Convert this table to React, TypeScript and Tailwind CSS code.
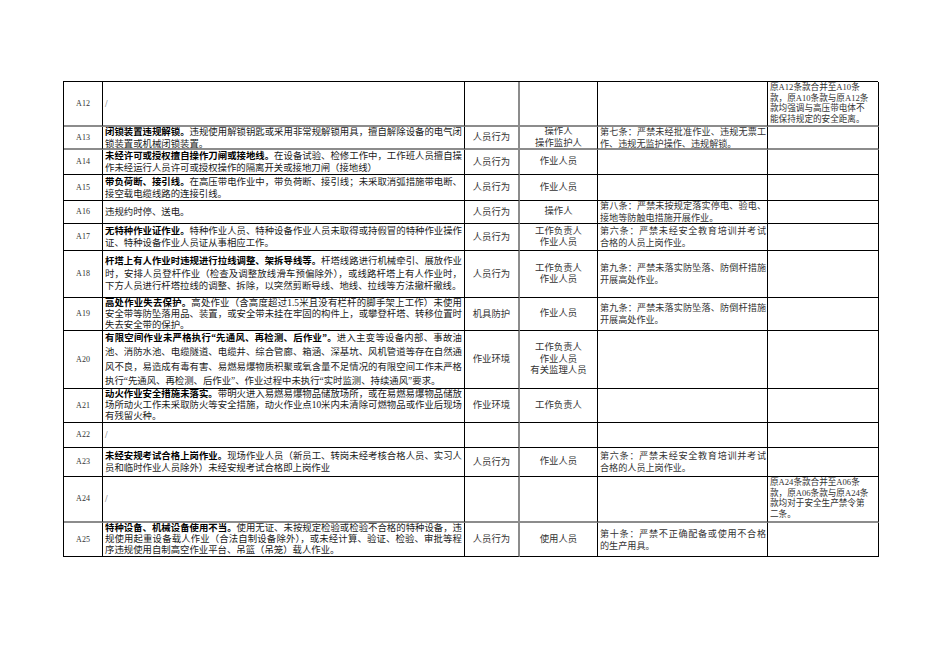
import React from "react";

type Row = {
  id: string;
  h: number;
  lead?: string;
  desc: { bold?: string; lines: string[] } | null;
  kind?: string;
  who?: string[];
  rule?: string[];
  note?: string[];
  grayBottom?: boolean;
};

const ROWS: Row[] = [
  {
    id: "A12",
    h: 45,
    desc: null,
    note: ["原A12条款合并至A10条", "款，原A10条款与原A12条", "款均强调与高压带电体不", "能保持规定的安全距离。"],
    grayBottom: true,
  },
  {
    id: "A13",
    h: 23,
    desc: {
      bold: "闭锁装置违规解锁。",
      lines: ["违规使用解锁钥匙或采用非常规解锁用具，擅自解除设备的电气闭", "锁装置或机械闭锁装置。"],
    },
    kind: "人员行为",
    who: ["操作人", "操作监护人"],
    rule: ["第七条：严禁未经批准作业、违规无票工", "作、违规无监护操作、违规解锁。"],
    grayBottom: true,
  },
  {
    id: "A14",
    h: 25,
    desc: {
      bold: "未经许可或授权擅自操作刀闸或接地线。",
      lines: ["在设备试验、检修工作中，工作班人员擅自操", "作未经运行人员许可或授权操作的隔离开关或接地刀闸（接地线）"],
    },
    kind: "人员行为",
    who: ["作业人员"],
  },
  {
    id: "A15",
    h: 26,
    desc: {
      bold: "带负荷断、接引线。",
      lines: ["在高压带电作业中，带负荷断、接引线；未采取消弧措施带电断、", "接空载电缆线路的连接引线。"],
    },
    kind: "人员行为",
    who: ["作业人员"],
  },
  {
    id: "A16",
    h: 23,
    desc: { lines: ["违规约时停、送电。"] },
    kind: "人员行为",
    who: ["操作人"],
    rule: ["第八条：严禁未按规定落实停电、验电、", "接地等防触电措施开展作业。"],
  },
  {
    id: "A17",
    h: 27,
    desc: {
      bold: "无特种作业证作业。",
      lines: ["特种作业人员、特种设备作业人员未取得或持假冒的特种作业操作", "证、特种设备作业人员证从事相应工作。"],
    },
    kind: "人员行为",
    who: ["工作负责人", "作业人员"],
    rule: ["第六条：严禁未经安全教育培训并考试", "合格的人员上岗作业。"],
  },
  {
    id: "A18",
    h: 47,
    lead: "leading-[12.5px]",
    desc: {
      bold: "杆塔上有人作业时违规进行拉线调整、架拆导线等。",
      lines: [
        "杆塔线路进行机械牵引、展放作业",
        "时，安排人员登杆作业（检查及调整放线滑车预偏除外），或线路杆塔上有人作业时，",
        "下方人员进行杆塔拉线的调整、拆除，以突然剪断导线、地线、拉线等方法撤杆撤线。",
      ],
    },
    kind: "人员行为",
    who: ["工作负责人", "作业人员"],
    rule: ["第九条：严禁未落实防坠落、防倒杆措施", "开展高处作业。"],
  },
  {
    id: "A19",
    h: 33,
    lead: "leading-[11px]",
    desc: {
      bold: "高处作业失去保护。",
      lines: [
        "高处作业（含高度超过1.5米且没有栏杆的脚手架上工作）未使用",
        "安全带等防坠落用品、装置，或安全带未挂在牢固的构件上，或攀登杆塔、转移位置时",
        "失去安全带的保护。",
      ],
    },
    kind: "机具防护",
    who: ["作业人员"],
    rule: ["第九条：严禁未落实防坠落、防倒杆措施", "开展高处作业。"],
  },
  {
    id: "A20",
    h: 58,
    lead: "leading-[14.3px]",
    desc: {
      bold: "有限空间作业未严格执行“先通风、再检测、后作业”。",
      lines: [
        "进入主变等设备内部、事故油",
        "池、消防水池、电缆隧道、电缆井、综合管廊、箱涵、深基坑、风机管道等存在自然通",
        "风不良，易造成有毒有害、易燃易爆物质积聚或氧含量不足情况的有限空间工作未严格",
        "执行“先通风、再检测、后作业”、作业过程中未执行“实时监测、持续通风”要求。",
      ],
    },
    kind: "作业环境",
    who: ["工作负责人", "作业人员", "有关监理人员"],
  },
  {
    id: "A21",
    h: 34,
    lead: "leading-[11.3px]",
    desc: {
      bold: "动火作业安全措施未落实。",
      lines: [
        "带明火进入易燃易爆物品储放场所，或在易燃易爆物品储放",
        "场所动火工作未采取防火等安全措施，动火作业点10米内未清除可燃物品或作业后现场",
        "有残留火种。",
      ],
    },
    kind: "作业环境",
    who: ["工作负责人"],
  },
  { id: "A22", h: 25, desc: null },
  {
    id: "A23",
    h: 29,
    desc: {
      bold: "未经安规考试合格上岗作业。",
      lines: ["现场作业人员（新员工、转岗未经考核合格人员、实习人", "员和临时作业人员除外）未经安规考试合格即上岗作业"],
    },
    kind: "人员行为",
    who: ["作业人员"],
    rule: ["第六条：严禁未经安全教育培训并考试", "合格的人员上岗作业。"],
  },
  {
    id: "A24",
    h: 46,
    desc: null,
    note: ["原A24条款合并至A06条", "款，原A06条款与原A24条", "款均对于安全生产禁令第", "二条。"],
    grayBottom: true,
  },
  {
    id: "A25",
    h: 34,
    lead: "leading-[11.3px]",
    desc: {
      bold: "特种设备、机械设备使用不当。",
      lines: [
        "使用无证、未按规定检验或检验不合格的特种设备，违",
        "规使用起重设备载人作业（合法自制设备除外），或未经计算、验证、检验、审批等程",
        "序违规使用自制高空作业平台、吊篮（吊笼）载人作业。",
      ],
    },
    kind: "人员行为",
    who: ["使用人员"],
    rule: ["第十条：严禁不正确配备或使用不合格", "的生产用具。"],
  },
];

const FONT = "font-['Liberation_Serif','Noto_Sans_CJK_SC',serif]";

function Lines({ lines, bold }: { lines: string[]; bold?: string }) {
  return (
    <>
      {lines.map((l, i) => {
        const last = i === lines.length - 1;
        return (
          <div
            key={i}
            className={
              "whitespace-nowrap " + (last ? "text-left" : "text-justify [text-align-last:justify]")
            }
          >
            {i === 0 && bold ? <b className="font-bold text-black">{bold}</b> : null}
            {l}
          </div>
        );
      })}
    </>
  );
}

function TableRow({ r }: { r: Row }) {
  const bb = r.grayBottom ? "border-b-2 border-b-[#8c8c8c]" : "border-b border-b-black";
  const cell = "overflow-hidden " + bb;
  return (
    <>
      <div className={cell + " flex items-center justify-center border-r border-r-black text-[8px] text-[#333]"}>
        {r.id}
      </div>
      <div
        className={
          cell +
          " flex flex-col justify-center border-r border-r-black px-[2px] text-[9.4px] text-[#1a1a1a] " +
          (r.lead ?? "leading-[12px]")
        }
      >
        {r.desc ? <Lines lines={r.desc.lines} bold={r.desc.bold} /> : <div className="text-[#666]">/</div>}
      </div>
      <div className={cell + " flex items-center justify-center border-r-2 border-r-[#8c8c8c] text-[9.4px] text-[#333]"}>
        {r.kind}
      </div>
      <div
        className={
          cell + " flex flex-col items-center justify-center border-r border-r-black text-[9.4px] leading-[11.5px] text-[#333]"
        }
      >
        {r.who?.map((w) => (
          <div key={w}>{w}</div>
        ))}
      </div>
      <div
        className={
          cell + " flex flex-col justify-center border-r border-r-black pl-[2px] pr-px text-[9.1px] leading-[12px] text-[#333]"
        }
      >
        {r.rule ? <Lines lines={r.rule} /> : null}
      </div>
      <div className={cell + " flex flex-col justify-start border-r border-r-black px-[2px] text-[8.6px] leading-[10.6px] text-[#333]"}>
        {r.note?.map((n, i) => (
          <div key={i} className="whitespace-nowrap">
            {n}
          </div>
        ))}
      </div>
    </>
  );
}

export default function App() {
  return (
    <div className={"h-[672px] w-[950px] bg-white pl-[63px] pt-[81px] " + FONT}>
      <div
        className="grid w-[815px] grid-cols-[39px_362px_55px_78px_170px_111px] border-l border-t border-black"
        style={{ gridTemplateRows: ROWS.map((r) => `${r.h}px`).join(" ") }}
      >
        {ROWS.map((r) => (
          <TableRow key={r.id} r={r} />
        ))}
      </div>
    </div>
  );
}
